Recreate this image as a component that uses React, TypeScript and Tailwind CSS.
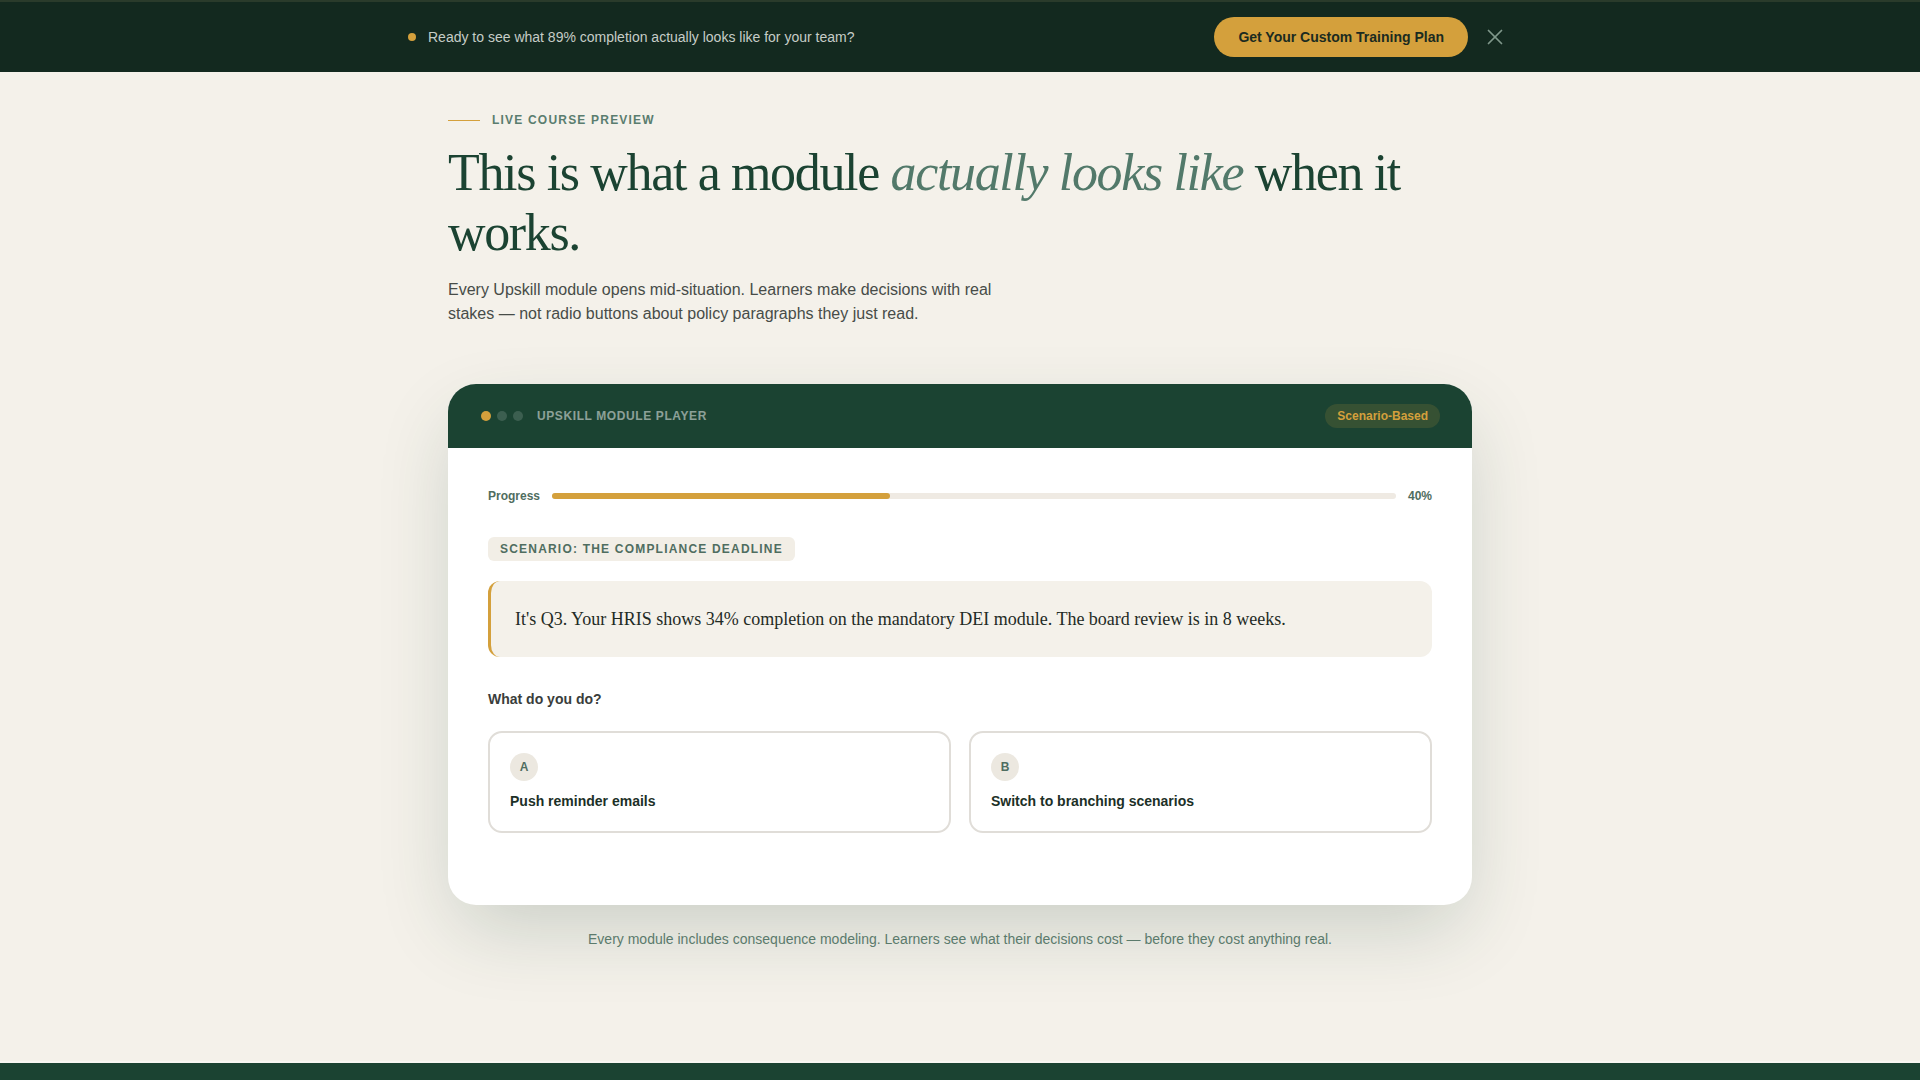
import React from 'react';
import { X } from 'lucide-react';

const SANS = { fontFamily: '"Liberation Sans", Arial, sans-serif' };
const SERIF = { fontFamily: '"Liberation Serif", "Times New Roman", serif' };

type Choice = { key: string; label: string };

const choices: Choice[] = [
  { key: 'A', label: 'Push reminder emails' },
  { key: 'B', label: 'Switch to branching scenarios' },
];

const TopBanner: React.FC = () => (
  <div className="h-[72px] bg-[#13291f] border-t-2 border-[#2a3b2b]">
    <div className="max-w-6xl mx-auto px-6 h-full flex items-center justify-between">
      <div className="flex items-center gap-3">
        <span className="w-2 h-2 rounded-full bg-[#d4a03c]" />
        <span className="text-sm text-[#c6cdc7]">
          Ready to see what 89% completion actually looks like for your team?
        </span>
      </div>
      <div className="flex items-center gap-[14px] mr-1">
        <button className="h-10 px-6 rounded-full bg-[#d4a03c] text-sm font-bold text-[#1b2b20]">
          Get Your Custom Training Plan
        </button>
        <button className="text-[#7f978a]" aria-label="Close">
          <X size={26} strokeWidth={1.6} />
        </button>
      </div>
    </div>
  </div>
);

const ModulePlayer: React.FC = () => {
  const progress = 40;
  return (
    <div className="mt-[58px] rounded-[28px] bg-white overflow-hidden shadow-[0_30px_80px_-10px_rgba(27,67,50,0.2)]">
      <div className="h-16 bg-[#1b4332] px-8 flex items-center justify-between">
        <div className="flex items-center">
          <div className="flex items-center gap-[6px] ml-px mr-[14px]">
            <span className="w-[10px] h-[10px] rounded-full bg-[#d4a03c]" />
            <span className="w-[10px] h-[10px] rounded-full bg-white/15" />
            <span className="w-[10px] h-[10px] rounded-full bg-white/15" />
          </div>
          <span className="text-xs font-bold uppercase tracking-[0.05em] text-white/50">
            Upskill Module Player
          </span>
        </div>
        <span className="h-6 px-3 rounded-full bg-[#d4a03c]/15 text-xs font-bold text-[#d4a03c] flex items-center">
          Scenario-Based
        </span>
      </div>

      <div className="px-10 pt-10 pb-[72px]">
        <div className="flex items-center gap-3 mb-8">
          <span className="text-xs font-bold text-[#4f6d60] leading-4">Progress</span>
          <div className="flex-1 h-1.5 rounded-full bg-[#efeae3]">
            <div className="h-full rounded-full bg-[#d4a03c]" style={{ width: `${progress}%` }} />
          </div>
          <span className="text-xs font-bold text-[#4f6d60] leading-4">{progress}%</span>
        </div>

        <span className="inline-block px-3 py-1 rounded-md bg-[#f2eee6] text-xs leading-4 font-bold uppercase tracking-[0.1em] text-[#4f6d60]">
          Scenario: The Compliance Deadline
        </span>

        <div className="mt-5 rounded-xl border-l-[3px] border-[#d4a03c] bg-[#f4f1ea] pl-6 pr-6 py-6">
          <p className="text-lg leading-7 text-[#1f2b25]" style={SERIF}>
            It's Q3. Your HRIS shows 34% completion on the mandatory DEI module. The board review is in 8 weeks.
          </p>
        </div>

        <p className="mt-8 mb-[22px] text-sm font-bold text-[#3a3d3b]">What do you do?</p>

        <div className="grid grid-cols-2 gap-[18px]">
          {choices.map(c => (
            <div key={c.key} className="rounded-[14px] border-2 border-[#e0ddd8] p-5 bg-white">
              <div className="w-7 h-7 rounded-full bg-[#ece8e0] flex items-center justify-center text-xs font-bold text-[#4f6d60]">
                {c.key}
              </div>
              <p className="mt-2.5 text-sm leading-5 font-bold text-[#1c3027]">{c.label}</p>
            </div>
          ))}
        </div>
      </div>
    </div>
  );
};

export default function App() {
  return (
    <div className="min-h-screen bg-[#f4f1ea] flex flex-col" style={SANS}>
      <TopBanner />
      <section className="pt-10 pb-[112px]">
        <div className="max-w-[1024px] mx-auto">
          <div className="flex items-center gap-3 mb-[15px]">
            <span className="w-8 h-px bg-[#d4a03c]" />
            <span className="text-xs leading-4 font-bold uppercase tracking-[0.1em] text-[#5a7d6f]">
              Live Course Preview
            </span>
          </div>
          <h1
            className="text-[52px] leading-[1.15] tracking-[-0.026em] text-[#1b4332] font-normal"
            style={SERIF}
          >
            This is what a module <em className="italic text-[#52796a]">actually looks like</em> when it works.
          </h1>
          <p className="mt-[15px] max-w-xl text-base leading-6 text-[#474c48]">
            Every Upskill module opens mid-situation. Learners make decisions with real stakes — not radio buttons
            about policy paragraphs they just read.
          </p>

          <ModulePlayer />

          <p className="mt-6 text-center text-sm leading-5 text-[#5b7a6c]">
            Every module includes consequence modeling. Learners see what their decisions cost — before they cost
            anything real.
          </p>
        </div>
      </section>
      <div className="flex-1 min-h-[18px] bg-[#1b4332] border-t-2 border-[#f8f6f2]" />
    </div>
  );
}
